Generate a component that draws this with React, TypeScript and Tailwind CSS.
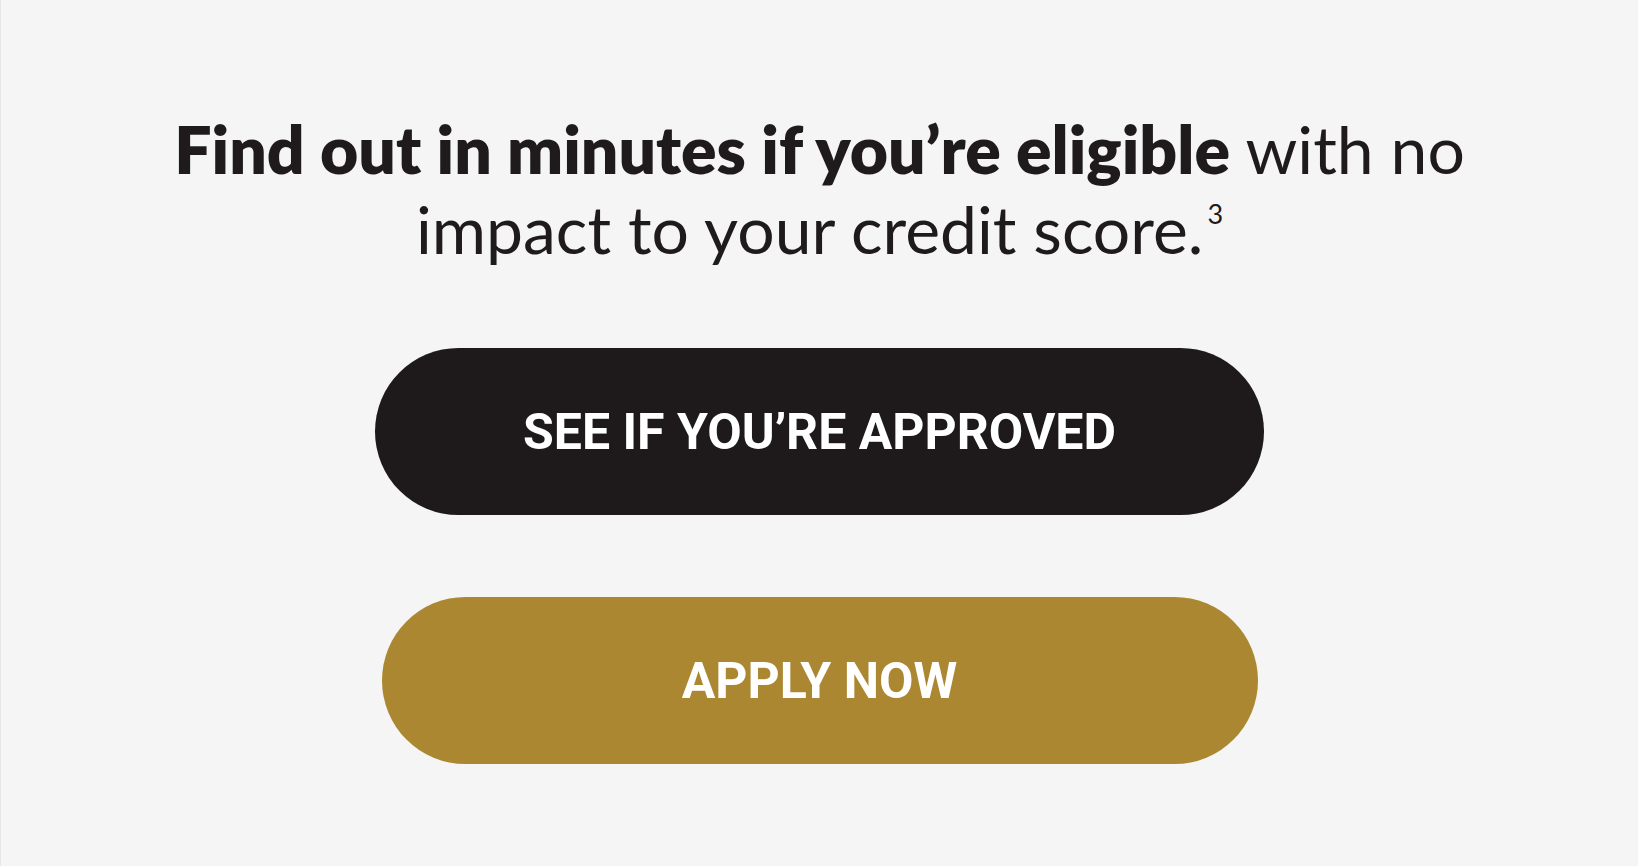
export default function App() {
  return (
    <div className="min-h-[866px] w-full bg-[#f5f5f5] border-l border-[#e6e6e6] flex flex-col items-center">
      <h1 className="mt-[109px] text-center font-['Lato',sans-serif] text-[66px] leading-[80px] text-[#1f1b1c]">
        <span className="font-extrabold">Find out in minutes if you’re eligible</span>{" "}
        <span className="font-normal">with no</span>
        <br />
        <span className="font-normal">
          impact to your credit score.
          <sup className="text-[27px] top-[-30px] ml-[4px]">3</sup>
        </span>
      </h1>

      <div className="mt-[79px] flex flex-col items-center gap-[82px] font-['Roboto',sans-serif]">
        <button className="w-[889px] h-[167px] rounded-full bg-[#1e1a1b] text-white font-bold text-[50px] uppercase pt-[2px]">
          See if you’re approved
        </button>
        <button className="w-[876px] h-[167px] rounded-full bg-[#ab8732] text-white font-bold text-[50px] uppercase pt-[2px]">
          Apply now
        </button>
      </div>
    </div>
  );
}
